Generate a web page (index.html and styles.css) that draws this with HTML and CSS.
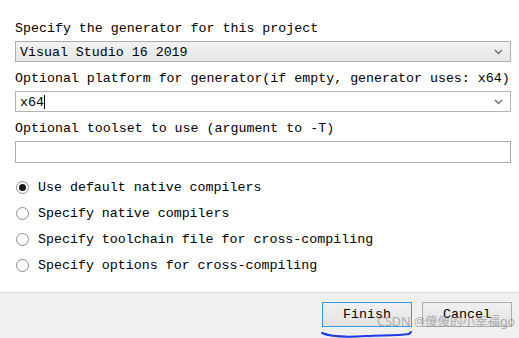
FILE: index.html
```html
<!DOCTYPE html>
<html lang="en">
<head>
    <meta charset="UTF-8">
    <title>Specify the generator</title>
    <link rel="stylesheet" href="styles.css">
</head>
<body>
    <div class="page">
        <div class="form">
            <div class="label">Specify the generator for this project</div>
            <div class="combo combo-readonly">
                <span class="combo-text">Visual Studio 16 2019</span>
                <svg class="chevron" width="9" height="6" viewBox="0 0 9 6"><path d="M1 1 L4.5 4.5 L8 1" fill="none" stroke="#707070" stroke-width="1.4"/></svg>
            </div>

            <div class="label label-gap">Optional platform for generator(if empty, generator uses: x64)</div>
            <div class="combo combo-edit">
                <span class="combo-text">x64<span class="caret"></span></span>
                <svg class="chevron" width="9" height="6" viewBox="0 0 9 6"><path d="M1 1 L4.5 4.5 L8 1" fill="none" stroke="#707070" stroke-width="1.4"/></svg>
            </div>

            <div class="label label-gap">Optional toolset to use (argument to -T)</div>
            <div class="textbox"></div>

            <div class="radios">
                <div class="radio-row"><span class="radio checked"></span>Use default native compilers</div>
                <div class="radio-row"><span class="radio"></span>Specify native compilers</div>
                <div class="radio-row"><span class="radio"></span>Specify toolchain file for cross-compiling</div>
                <div class="radio-row"><span class="radio"></span>Specify options for cross-compiling</div>
            </div>
        </div>

        <div class="footer">
            <button class="btn btn-default">Finish</button>
            <button class="btn">Cancel</button>
            <svg class="scribble" width="100" height="10" viewBox="0 0 100 10"><path d="M1 3 C10 7, 30 7, 45 6 C60 5, 75 6, 88 4 L90 2" fill="none" stroke="#1d3be8" stroke-width="2" stroke-linecap="round"/></svg>
            <span class="watermark">CSDN @傻傻的小幸福go</span>
        </div>
    </div>
</body>
</html>
```

FILE: styles.css
```css
body {
    margin: 0;
    background: #ffffff;
    font-family: "Liberation Mono", "DejaVu Sans Mono", monospace;
    font-size: 13.3px;
    color: #000000;
}
.page {
    width: 519px;
    height: 338px;
    display: flex;
    flex-direction: column;
    overflow: hidden;
}
.form {
    height: 292px;
    padding: 19px 8px 0 15px;
    box-sizing: border-box;
}
.label {
    height: 16px;
    line-height: 19px;
    white-space: nowrap;
    margin-bottom: 6px;
}
.label-gap {
    margin-top: 7px;
}
.combo {
    height: 21px;
    border: 1px solid #adadad;
    box-sizing: border-box;
    display: flex;
    align-items: center;
    justify-content: space-between;
    padding: 1px 7px 0 4px;
}
.combo-readonly {
    background: linear-gradient(#f2f2f2, #e6e6e6);
}
.combo-edit {
    background: #ffffff;
    border-color: #b4b4b4;
}
.combo-text {
    display: flex;
    align-items: center;
}
.caret {
    display: inline-block;
    width: 1px;
    height: 14px;
    background: #000000;
}
.textbox {
    height: 22px;
    border: 1px solid #abadb3;
    box-sizing: border-box;
    background: #ffffff;
}
.radios {
    margin-top: 12px;
}
.radio-row {
    height: 25.8px;
    display: flex;
    align-items: center;
    white-space: nowrap;
}
.radio {
    width: 13px;
    height: 13px;
    border: 1px solid #8c8c8c;
    border-radius: 50%;
    box-sizing: border-box;
    margin: 0 9px 0 1px;
    display: flex;
    align-items: center;
    justify-content: center;
    background: #ffffff;
}
.radio.checked::after {
    content: "";
    width: 7px;
    height: 7px;
    border-radius: 50%;
    background: #1a1a1a;
}
.footer {
    flex: 1;
    position: relative;
    background: #f0f0f0;
    border-top: 1px solid #dddddd;
    display: flex;
    justify-content: flex-end;
    align-items: flex-start;
    gap: 10px;
    padding: 9px 7px 0 0;
}
.btn {
    width: 90px;
    height: 25px;
    font-family: "Liberation Mono", "DejaVu Sans Mono", monospace;
    font-size: 13.3px;
    color: #000000;
    border: 1px solid #adadad;
    background: linear-gradient(#f0f0f0, #e3e3e3);
    padding: 0;
}
.btn-default {
    border-color: #3399ee;
}
.scribble {
    position: absolute;
    left: 321px;
    top: 37px;
}
.watermark {
    position: absolute;
    left: 377px;
    top: 18px;
    font-family: "Noto Sans", "Noto Sans CJK SC", sans-serif;
    font-size: 12.5px;
    color: rgba(120, 120, 120, 0.55);
    white-space: nowrap;
}
```
